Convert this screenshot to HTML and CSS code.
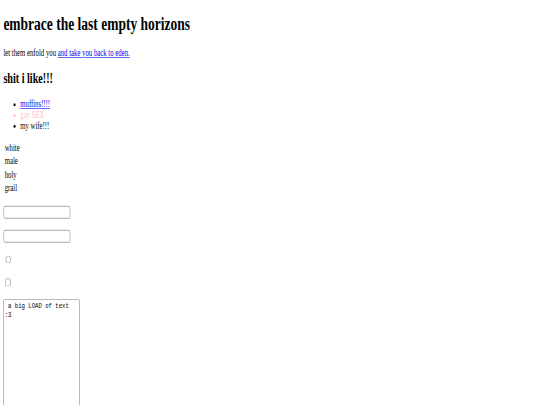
FILE: index.html
```html
<!DOCTYPE html>
<html>
<head>
<meta charset="utf-8">
<link rel="stylesheet" href="styles.css">
</head>
<body>
<div class="stage">
<div class="page">
<h1>embrace the last empty horizons</h1>
<p>let them enfold you <a href="#">and take you back to eden. </a></p>
<h2>shit i like!!!</h2>
<ul>
<li><a href="#">muffins!!!!</a></li>
<li class="pink">gay SEX</li>
<li>my wife!!!</li>
</ul>
<table>
<tr><td>white</td></tr>
<tr><td>male</td></tr>
<tr><td>holy</td></tr>
<tr><td>grail</td></tr>
</table>
<br>
<input class="field" type="text"><br><br>
<input class="field" type="password"><br><br>
<input type="radio"><br><br>
<input type="checkbox"><br><br>
<textarea rows="20" cols="20"> a big LOAD of text
:3</textarea>
</div>
</div>
</body>
</html>
```
FILE: styles.css
```css
html, body {
  margin: 0;
  padding: 0;
  overflow: hidden;
  background: #fff;
}
.stage {
  width: 540px;
  height: 405px;
  overflow: hidden;
}
.page {
  display: flow-root;
  width: 1264px;
  padding: 0 8px 8px 8px;
  font-family: "Liberation Serif", serif;
  transform: scale(0.421875, 0.6);
  transform-origin: 0 0;
}
.page a {
  color: #0000ee;
}
.pink {
  color: pink;
}
.field {
  width: 159px;
  height: 22px;
  box-sizing: border-box;
  border: 2px solid #b8b8b8;
  border-radius: 4px;
}
.page textarea {
  font-family: "Liberation Mono", monospace;
}
```
